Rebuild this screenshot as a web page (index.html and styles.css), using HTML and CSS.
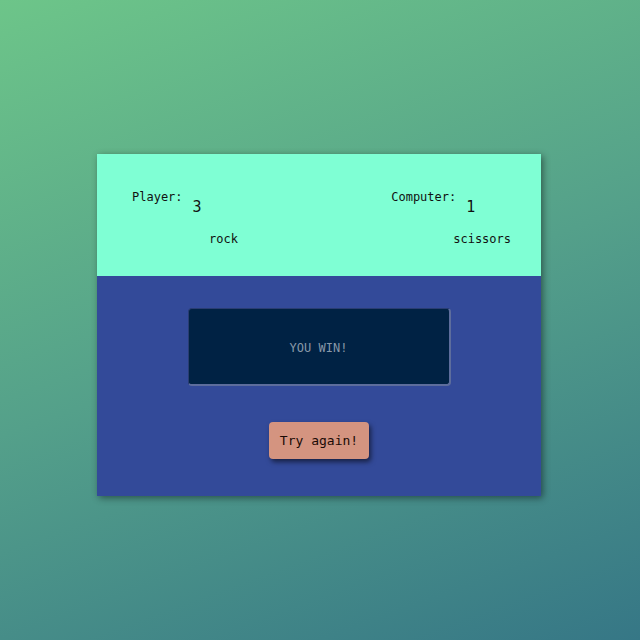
FILE: index.html
```html
<!DOCTYPE html>
<html>
<head>
<meta charset="utf-8">
<link rel="stylesheet" href="styles.css">
</head>
<body>
<div class="card">
  <div class="scoreboard">
    <div class="side side-player">
      <div class="line"><span class="label">Player:</span><span class="score">3</span></div>
      <div class="choice choice-player">rock</div>
    </div>
    <div class="side side-computer">
      <div class="line"><span class="label">Computer:</span><span class="score">1</span></div>
      <div class="choice choice-computer">scissors</div>
    </div>
  </div>
  <div class="play">
    <div class="result">YOU WIN!</div>
    <button class="again">Try again!</button>
  </div>
</div>
</body>
</html>
```
FILE: styles.css
```css
html, body {
  margin: 0;
  height: 100%;
}
body {
  background: linear-gradient(160deg, #6dc589 0%, #54a08a 50%, #367786 100%);
  font-family: "DejaVu Sans Mono", monospace;
  display: flex;
  justify-content: center;
  align-items: flex-start;
}
.card {
  margin-top: 154px;
  margin-left: -2px;
  width: 444px;
  box-shadow: 2px 2px 7px rgba(0, 0, 0, 0.45);
}
.scoreboard {
  background: #7fffd4;
  height: 122px;
  box-sizing: border-box;
  padding: 36px 30px 0 35px;
  display: flex;
  justify-content: space-between;
  color: #111;
}
.line {
  display: flex;
  align-items: flex-start;
}
.label {
  font-size: 12px;
  line-height: 14px;
}
.score {
  font-size: 15px;
  line-height: 18px;
  margin-top: 8px;
  margin-left: 10px;
}
.choice {
  font-size: 12px;
  line-height: 14px;
  margin-top: 16px;
}
.choice-player {
  margin-left: 77px;
}
.choice-computer {
  margin-left: 62px;
}
.play {
  background: #334a99;
  height: 220px;
  display: flex;
  flex-direction: column;
  align-items: center;
}
.result {
  margin-top: 32px;
  width: 263px;
  height: 78px;
  box-sizing: border-box;
  padding-top: 2px;
  background: #002244;
  border-radius: 4px;
  border-style: solid;
  border-width: 1px 2px 2px 1px;
  border-color: #2a3d72 #5d6d9c #5d6d9c #2a3d72;
  color: #8898a8;
  font-size: 12px;
  display: flex;
  align-items: center;
  justify-content: center;
}
.again {
  margin-top: 36px;
  width: 100px;
  height: 37px;
  background: #d49480;
  border: none;
  border-radius: 4px;
  font-family: "DejaVu Sans Mono", monospace;
  font-size: 13px;
  color: #1a0a05;
  box-shadow: 2px 3px 5px rgba(0, 0, 0, 0.55);
  padding: 0;
}
```
